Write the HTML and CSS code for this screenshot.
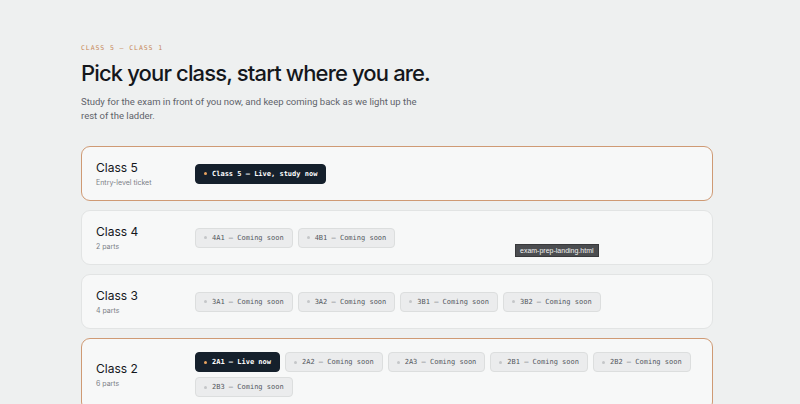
FILE: index.html
```html
<!DOCTYPE html>
<html lang="en">
<head>
  <meta charset="UTF-8" />
  <meta name="viewport" content="width=device-width, initial-scale=1.0"/>
  <title>Exam Prep - Pick your class</title>
  <link rel="stylesheet" href="styles.css">
</head>
<body>

  <main class="page">
    <!-- Intro -->
    <header class="intro">
      <div class="eyebrow">Class 5 — Class 1</div>
      <h1>Pick your class, start where you are.</h1>
      <p>Study for the exam in front of you now, and keep coming back as we light up the rest of the ladder.</p>
    </header>

    <!-- Class ladder -->
    <section class="ladder">
      <div class="class-card live">
        <div class="class-label">
          <div class="class-name">Class 5</div>
          <div class="class-sub">Entry-level ticket</div>
        </div>
        <div class="chips">
          <span class="chip on"><i class="dot"></i>Class 5 — Live, study now</span>
        </div>
      </div>

      <div class="class-card">
        <div class="class-label">
          <div class="class-name">Class 4</div>
          <div class="class-sub">2 parts</div>
        </div>
        <div class="chips">
          <span class="chip"><i class="dot"></i>4A1 — Coming soon</span>
          <span class="chip"><i class="dot"></i>4B1 — Coming soon</span>
        </div>
      </div>

      <div class="class-card">
        <div class="class-label">
          <div class="class-name">Class 3</div>
          <div class="class-sub">4 parts</div>
        </div>
        <div class="chips">
          <span class="chip"><i class="dot"></i>3A1 — Coming soon</span>
          <span class="chip"><i class="dot"></i>3A2 — Coming soon</span>
          <span class="chip"><i class="dot"></i>3B1 — Coming soon</span>
          <span class="chip"><i class="dot"></i>3B2 — Coming soon</span>
        </div>
      </div>

      <div class="class-card live">
        <div class="class-label">
          <div class="class-name">Class 2</div>
          <div class="class-sub">6 parts</div>
        </div>
        <div class="chips">
          <span class="chip on"><i class="dot"></i>2A1 — Live now</span>
          <span class="chip"><i class="dot"></i>2A2 — Coming soon</span>
          <span class="chip"><i class="dot"></i>2A3 — Coming soon</span>
          <span class="chip"><i class="dot"></i>2B1 — Coming soon</span>
          <span class="chip"><i class="dot"></i>2B2 — Coming soon</span>
          <span class="chip"><i class="dot"></i>2B3 — Coming soon</span>
        </div>
      </div>
    </section>
  </main>

  <!-- browser tooltip -->
  <div class="tooltip">exam-prep-landing.html</div>

</body>
</html>
```

FILE: styles.css
```css
body {
  margin: 0;
  background: #eef0f0;
  font-family: Inter, "Noto Sans", sans-serif;
  color: #15191f;
  overflow: hidden;
}

.page {
  width: 632px;
  margin-left: 81px;
  padding-top: 44px;
}

/* Intro */
.eyebrow {
  font-family: "DejaVu Sans Mono", monospace;
  font-size: 6.5px;
  letter-spacing: 0.14em;
  text-transform: uppercase;
  color: #c7895a;
}

h1 {
  margin: 8px 0 0;
  font-size: 22px;
  font-weight: 500;
  letter-spacing: -0.039em;
  color: #14171c;
}

.intro p {
  margin: 9px 0 0;
  width: 340px;
  font-family: Roboto, sans-serif;
  font-size: 9.5px;
  line-height: 14px;
  color: #5e636a;
}

/* Ladder */
.ladder {
  margin-top: 23px;
  display: flex;
  flex-direction: column;
  gap: 9px;
}

.class-card {
  display: flex;
  align-items: center;
  padding: 13px 14px;
  background: #f7f8f8;
  border: 1px solid #e2e4e4;
  border-radius: 9px;
}

.class-card.live {
  border-color: #cf9a74;
}

.class-label {
  width: 99px;
  flex-shrink: 0;
}

.class-name {
  font-size: 12px;
  line-height: 16px;
  color: #14171c;
}

.class-sub {
  margin-top: 2px;
  font-size: 7px;
  line-height: 9px;
  color: #7b8087;
}

.chips {
  display: flex;
  flex-wrap: wrap;
  gap: 5px;
}

.chip {
  display: flex;
  align-items: center;
  gap: 5px;
  height: 18px;
  padding: 0 8px;
  font-family: "DejaVu Sans Mono", monospace;
  font-size: 7px;
  color: #53585e;
  background: #ebeced;
  border: 1px solid #dcdede;
  border-radius: 4px;
}

.chip .dot {
  width: 3px;
  height: 3px;
  border-radius: 50%;
  background: #c4c6c8;
}

.chip.on {
  background: #15202c;
  border-color: #15202c;
  color: #fff;
  font-weight: bold;
}

.chip.on .dot {
  background: #e9a35f;
}

/* tooltip */
.tooltip {
  position: absolute;
  left: 515px;
  top: 244px;
  padding: 1px 4px;
  background: #4b4d50;
  border: 1px solid #38393b;
  color: #f2f2f2;
  font-family: "Liberation Sans", sans-serif;
  font-size: 7px;
  line-height: 9px;
}
```
